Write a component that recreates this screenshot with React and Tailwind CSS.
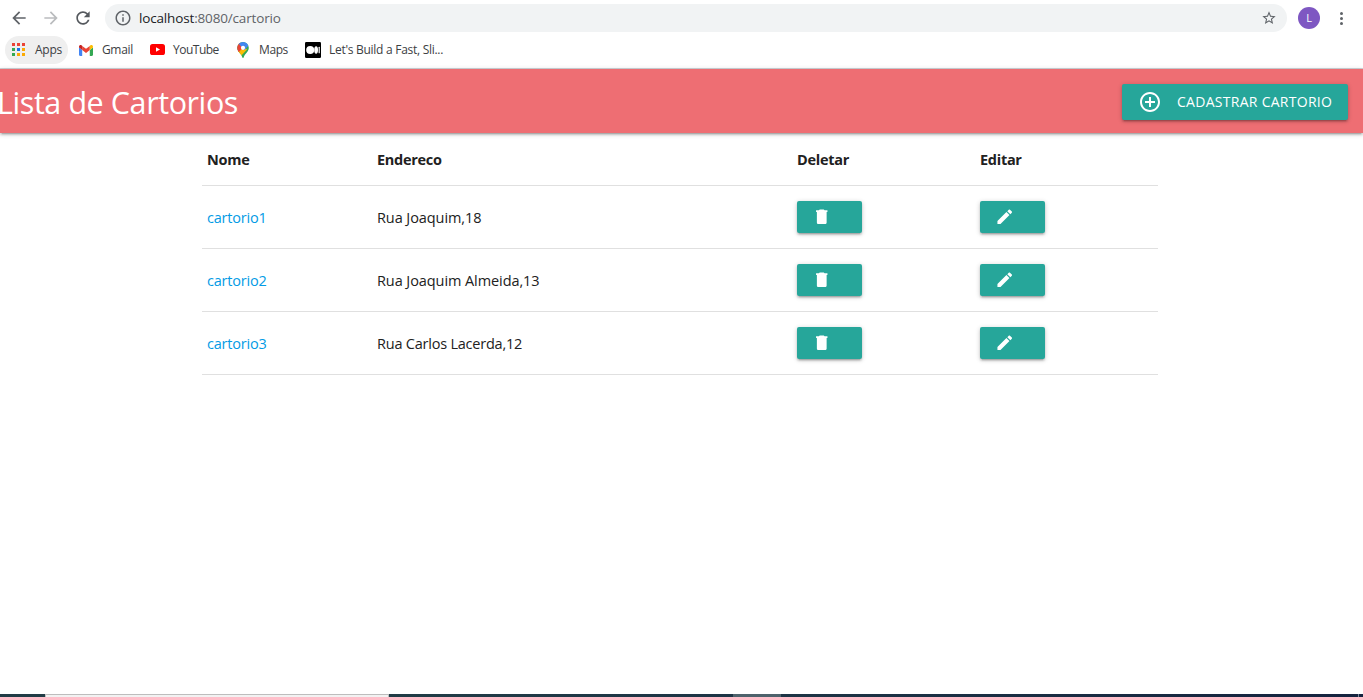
import React from 'react';

const rows = [
  { nome: 'cartorio1', endereco: 'Rua Joaquim,18', spacing: 'tracking-[-0.08px]' },
  { nome: 'cartorio2', endereco: 'Rua Joaquim Almeida,13', spacing: 'tracking-[-0.08px]' },
  { nome: 'cartorio3', endereco: 'Rua Carlos Lacerda,12', spacing: 'tracking-[-0.22px]' },
];

const paths = {
  back: 'M20 11H7.83l5.59-5.59L12 4l-8 8 8 8 1.41-1.41L7.83 13H20v-2z',
  forward: 'M12 4l-1.41 1.41L16.17 11H4v2h12.17l-5.58 5.59L12 20l8-8z',
  reload:
    'M17.65 6.35C16.2 4.9 14.21 4 12 4c-4.42 0-7.99 3.58-7.99 8s3.57 8 7.99 8c3.73 0 6.84-2.55 7.73-6h-2.08c-.82 2.33-3.04 4-5.65 4-3.31 0-6-2.69-6-6s2.69-6 6-6c1.66 0 3.14.69 4.22 1.78L13 11h7V4l-2.35 2.35z',
  info: 'M11 7h2v2h-2zm0 4h2v6h-2zm1-9C6.48 2 2 6.48 2 12s4.48 10 10 10 10-4.48 10-10S17.52 2 12 2zm0 18c-4.41 0-8-3.59-8-8s3.59-8 8-8 8 3.59 8 8-3.59 8-8 8z',
  star: 'M22 9.24l-7.19-.62L12 2 9.19 8.63 2 9.24l5.46 4.73L5.82 21 12 17.27 18.18 21l-1.63-7.03L22 9.24zM12 15.4l-3.76 2.27 1-4.28-3.32-2.88 4.38-.38L12 6.1l1.71 4.04 4.38.38-3.32 2.88 1 4.28L12 15.4z',
  add: 'M13 7h-2v4H7v2h4v4h2v-4h4v-2h-4V7zm-1-5C6.48 2 2 6.48 2 12s4.48 10 10 10 10-4.48 10-10S17.52 2 12 2zm0 18c-4.41 0-8-3.59-8-8s3.59-8 8-8 8 3.59 8 8-3.59 8-8 8z',
  trash: 'M6 19c0 1.1.9 2 2 2h8c1.1 0 2-.9 2-2V5.800H6v13.200zM19 4h-3.5l-1-1h-5l-1 1H5v2h14V4z',
  pencil:
    'M3 17.25V21h3.75L17.81 9.94l-3.75-3.75L3 17.25zM20.71 7.04c.39-.39.39-1.02 0-1.41l-2.34-2.34c-.39-.39-1.02-.39-1.41 0l-1.83 1.83 3.75 3.75 1.83-1.83z',
};

function Icon({ name, className }) {
  return (
    <svg viewBox="0 0 24 24" fill="currentColor" className={`shrink-0 ${className}`}>
      <path d={paths[name]} />
    </svg>
  );
}

const appColors = [
  '#ea4335', '#ea4335', '#ea4335',
  '#34a853', '#1a73e8', '#fbaa05',
  '#34a853', '#fbaa05', '#fbaa05',
];

function AppsIcon() {
  return (
    <svg viewBox="0 0 13 13" className="mb-px size-[13px] shrink-0" shapeRendering="crispEdges">
      {appColors.map((c, i) => (
        <rect key={i} x={(i % 3) * 5} y={Math.floor(i / 3) * 5} width="3" height="3" fill={c} />
      ))}
    </svg>
  );
}

function GmailIcon() {
  return (
    <svg viewBox="0 0 14 11" className="h-[11px] w-[14px] shrink-0">
      <path d="M0 1.8v7.9c0 .7.5 1.2 1.1 1.2h2.1V5L0 2.6z" fill="#4285f4" />
      <path d="M14 1.8v7.9c0 .7-.5 1.2-1.1 1.2h-2.1V5L14 2.6z" fill="#34a853" />
      <path d="M3.2 5V.9L7 3.8 10.8.9V5L7 7.9z" fill="#ea4335" />
      <path d="M0 1.7C0 .2 1.6-.5 2.7.4l.5.4V5L0 2.6z" fill="#c5221f" />
      <path d="M14 1.7c0-1.5-1.6-2.2-2.7-1.3l-.5.4V5L14 2.6z" fill="#fbbc04" />
    </svg>
  );
}

function YoutubeIcon() {
  return (
    <svg viewBox="0 0 15 11" className="mb-px h-[11px] w-[15px] shrink-0">
      <rect width="15" height="11" rx="2.6" fill="#f00" />
      <path d="M6 3.2v4.6l4-2.3z" fill="#fff" />
    </svg>
  );
}

function MapsIcon() {
  return (
    <svg viewBox="0 0 12 16" className="h-4 w-3 shrink-0">
      <defs>
        <clipPath id="pin">
          <path d="M6 0a5.8 5.8 0 0 0-5.8 5.8c0 2 .9 3.300 2 4.700C3.700 12.300 4.700 13.300 5.300 15.300c.3 1 1.100 1 1.400 0 .6-2 1.600-3 3.100-4.800 1.100-1.400 2-2.700 2-4.700A5.800 5.800 0 0 0 6 0z" />
        </clipPath>
      </defs>
      <g clipPath="url(#pin)">
        <rect width="12" height="16" fill="#34a853" />
        <path d="M0 10.500 6 4l4 3.500-7.500 8L0 12z" fill="#fbbc04" />
        <path d="M0 0h3l3 5.500L1.500 10.500 0 10z" fill="#ea4335" />
        <path d="M1.500 1.600 5 5.500 11 1 8-1H3z" fill="#4285f4" />
        <path d="M10 1 5 6.500 7.500 8 12 3z" fill="#4285f4" />
      </g>
      <circle cx="6" cy="5.800" r="2.100" fill="#fff" />
    </svg>
  );
}

function MediumIcon() {
  return (
    <svg viewBox="0 0 16 16" className="size-4 shrink-0">
      <rect width="16" height="16" rx="1.200" fill="#000" />
      <circle cx="5.200" cy="8" r="4" fill="#fff" />
      <ellipse cx="11.100" cy="8" rx="1.900" ry="3.700" fill="#fff" />
      <rect x="13.600" y="4.700" width="1.200" height="6.600" rx=".5" fill="#fff" />
    </svg>
  );
}

function Toolbar() {
  return (
    <div className="flex h-9 items-center pl-[9px] text-[#5f6368]">
      <Icon name="back" className="size-5" />
      <Icon name="forward" className="ml-3 size-5 text-[#babcbe]" />
      <Icon name="reload" className="ml-3 size-5 text-[#55595e]" />
      <div className="ml-3 flex h-7 w-[1182px] items-center rounded-full bg-[#f1f3f4] pr-[10px] pl-[9px]">
        <Icon name="info" className="size-[18px]" />
        <span className="ml-[7px] text-[13.5px] tracking-[-0.16px] whitespace-nowrap">
          <span className="text-[#202124]">localhost</span>:8080/cartorio
        </span>
        <Icon name="star" className="ml-auto size-4" />
      </div>
      <div className="ml-[11px] flex size-[22px] items-center justify-center rounded-full bg-[#7e57c2] text-[11px] text-white">
        L
      </div>
      <div className="ml-5 flex flex-col gap-[2px]">
        <i className="size-[3px] rounded-full bg-[#5f6368]" />
        <i className="size-[3px] rounded-full bg-[#5f6368]" />
        <i className="size-[3px] rounded-full bg-[#5f6368]" />
      </div>
    </div>
  );
}

function Bookmarks() {
  return (
    <div className="flex h-8 items-start pl-[5px] text-[12px] whitespace-nowrap text-[#3c4043]">
      <div className="flex h-7 w-[63px] items-center rounded-full bg-[#efefef] pl-[7px]">
        <AppsIcon />
        <span className="ml-[10px] tracking-[-0.25px]">Apps</span>
      </div>
      <div className="flex h-7 w-[71px] items-center pl-[11px]">
        <GmailIcon />
        <span className="ml-[9px] tracking-[-0.35px]">Gmail</span>
      </div>
      <div className="flex h-7 w-[98px] items-center pl-[11px]">
        <YoutubeIcon />
        <span className="ml-2 tracking-[-0.5px]">YouTube</span>
      </div>
      <div className="flex h-7 w-[68px] items-center">
        <MapsIcon />
        <span className="ml-[10px] tracking-[-0.4px]">Maps</span>
      </div>
      <div className="flex h-7 items-center">
        <MediumIcon />
        <span className="ml-2 tracking-[-0.28px]">Let's Build a Fast, Sli...</span>
      </div>
    </div>
  );
}

const raised =
  'rounded-[2px] bg-[#26a69a] text-white shadow-[0_2px_2px_0_rgba(0,0,0,0.14),0_3px_1px_-2px_rgba(0,0,0,0.12),0_1px_5px_0_rgba(0,0,0,0.2)]';

function RowButton({ icon, label }) {
  return (
    <button aria-label={label} className={`flex h-8 w-[65px] items-center pl-[15px] ${raised}`}>
      <Icon name={icon} className="size-[19.5px]" />
    </button>
  );
}

export default function App() {
  return (
    <div className="flex h-[697px] w-[1363px] flex-col overflow-hidden bg-white font-['Open_Sans','Noto_Sans',sans-serif]">
      <Toolbar />
      <Bookmarks />
      <div className="h-px shrink-0 bg-[#d0d3d8]" />
      <nav className="flex h-16 shrink-0 items-center justify-between bg-[#ee6e73] pr-[15px] shadow-[0_2px_2px_0_rgba(0,0,0,0.14),0_3px_1px_-2px_rgba(0,0,0,0.12),0_1px_5px_0_rgba(0,0,0,0.2)]">
        <span className="mt-1 -ml-[3px] text-[30.5px] tracking-[-0.42px] whitespace-nowrap text-white">
          Lista de Cartorios
        </span>
        <button className={`mt-0.5 flex h-9 w-[226px] items-center pl-4 ${raised}`}>
          <Icon name="add" className="size-6" />
          <span className="mb-0.5 ml-[15px] text-[14px] tracking-[0.28px] whitespace-nowrap">
            CADASTRAR CARTORIO
          </span>
        </button>
      </nav>

      <table className="ml-[202px] w-[956px] table-fixed border-collapse text-left text-[14.5px] whitespace-nowrap text-[#212121]">
        <colgroup>
          <col className="w-[170px]" />
          <col className="w-[420px]" />
          <col className="w-[183px]" />
          <col className="w-[183px]" />
        </colgroup>
        <thead>
          <tr className="h-[52px] border-b border-[#e0e0e0] tracking-[-0.28px]">
            <th className="px-[5px] pt-[3px] font-bold">Nome</th>
            <th className="px-[5px] pt-[3px] font-bold">Endereco</th>
            <th className="px-[5px] pt-[3px] font-bold">Deletar</th>
            <th className="px-[5px] pt-[3px] font-bold">Editar</th>
          </tr>
        </thead>
        <tbody>
          {rows.map((r) => (
            <tr key={r.nome} className="h-[63px] border-b border-[#e0e0e0]">
              <td className="px-[5px] pt-0.5 tracking-[-0.2px] text-[#039be5]">{r.nome}</td>
              <td className={`px-[5px] pt-0.5 ${r.spacing}`}>{r.endereco}</td>
              <td className="px-[5px]">
                <RowButton icon="trash" label="Deletar" />
              </td>
              <td className="px-[5px]">
                <RowButton icon="pencil" label="Editar" />
              </td>
            </tr>
          ))}
        </tbody>
      </table>

      <div className="mt-auto flex h-[3px] shrink-0 bg-[#1d3445]">
        <div className="w-[45px] bg-[#213c46]" />
        <div className="w-[344px] border-x border-t border-[#bdbdbd] bg-[#f2f2f2]" />
        <div className="w-[344px] bg-linear-to-r from-[#213c46] to-[#1d3445]" />
        <div className="w-12 bg-[#4e626c]" />
        <div className="w-[577px] bg-linear-to-r from-[#1d3445] to-[#15233f]" />
        <div className="w-px bg-[#7b8698]" />
        <div className="grow bg-[#15233f]" />
      </div>
    </div>
  );
}
